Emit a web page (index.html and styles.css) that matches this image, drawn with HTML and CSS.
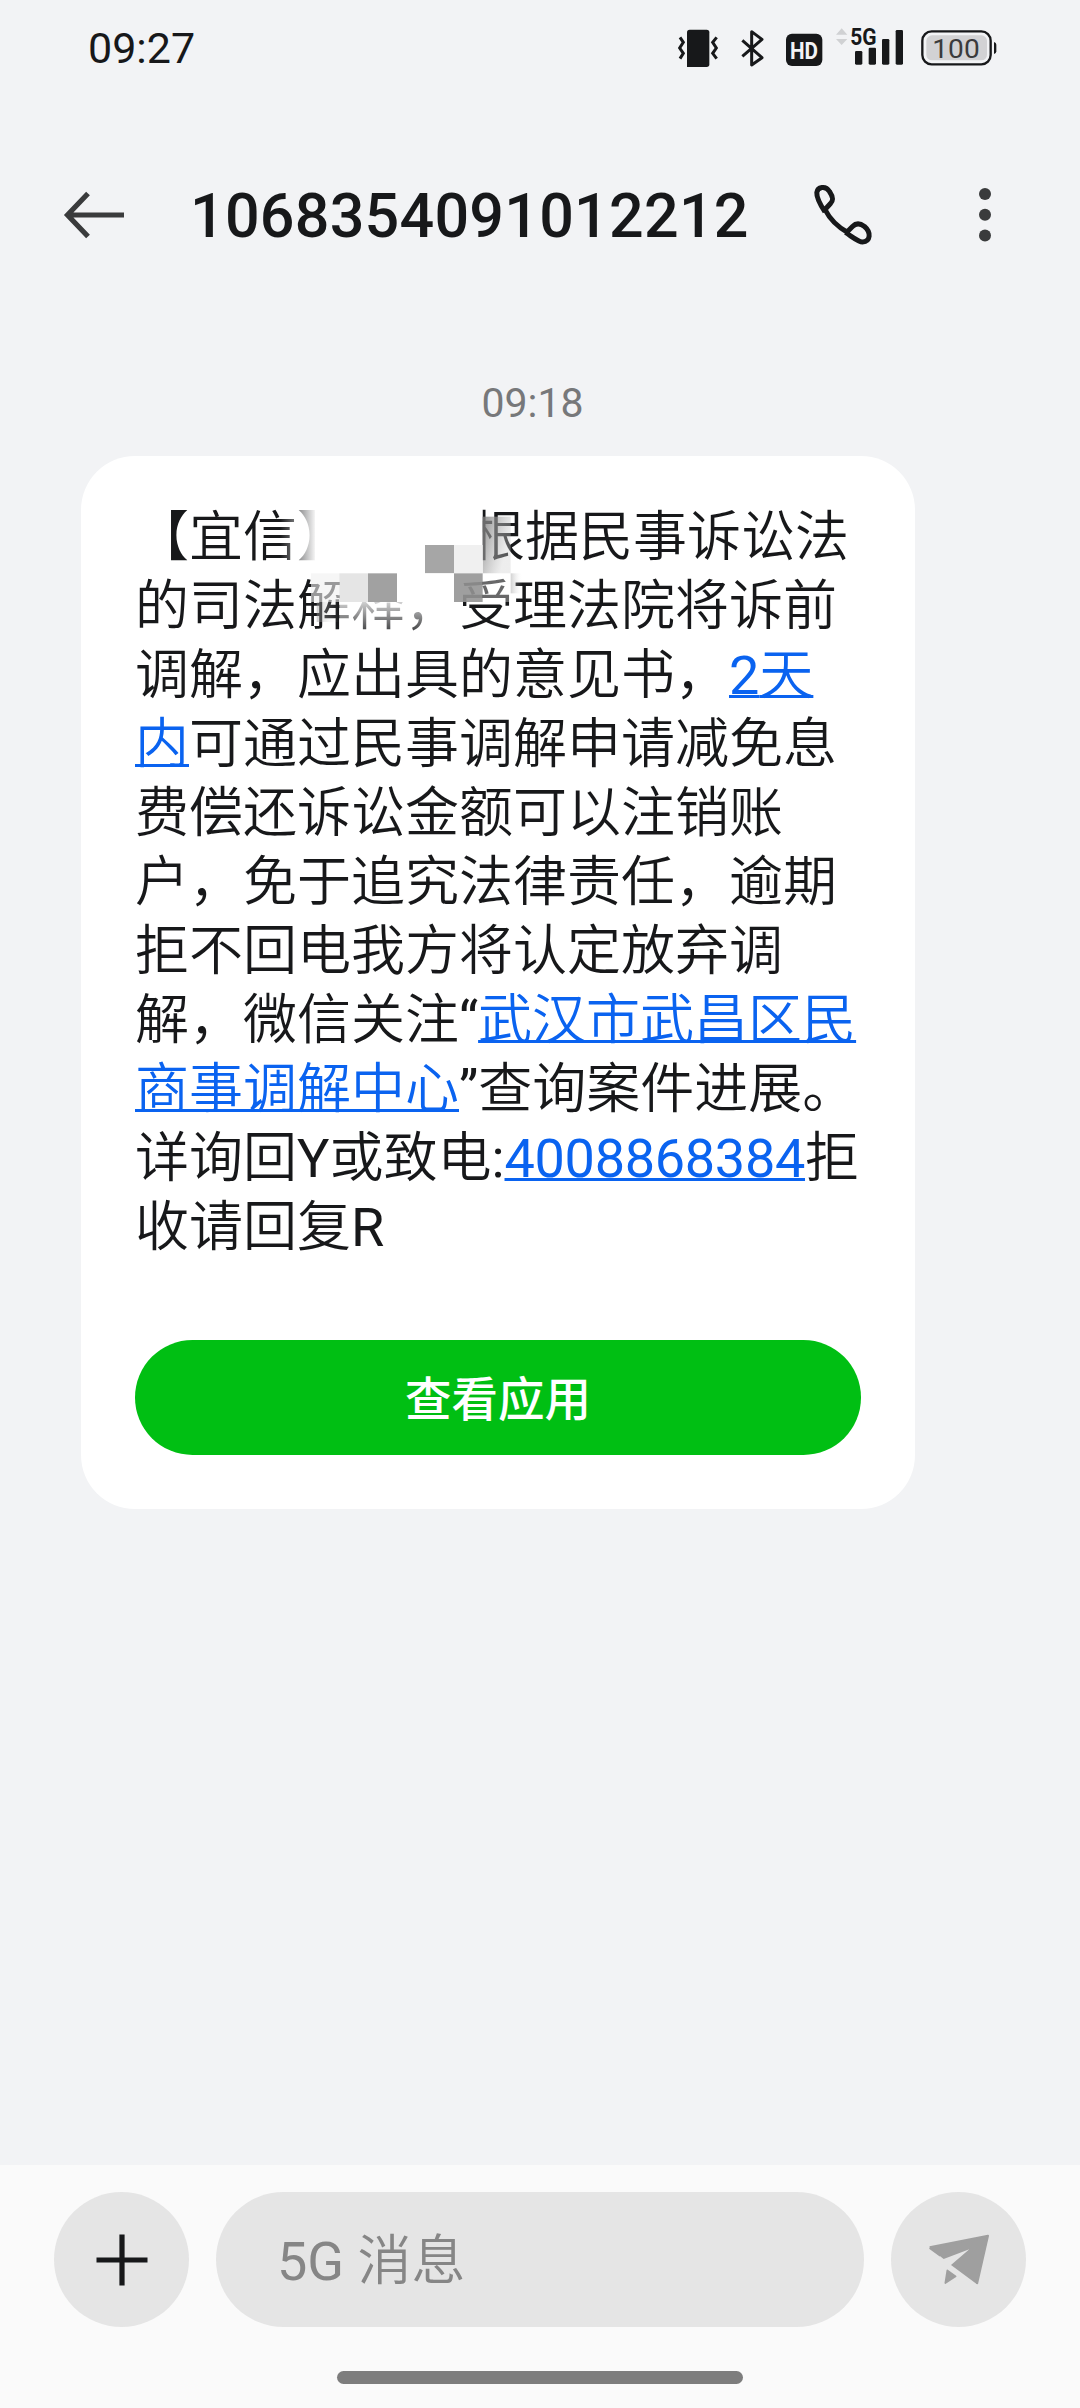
FILE: index.html
```html
<!DOCTYPE html>
<html lang="zh-CN">
<head>
<meta charset="utf-8">
<title>短信</title>
<link rel="stylesheet" href="styles.css">
</head>
<body>
<div class="screen">
  <header class="status-bar">
    <span class="clock">09:27</span>
    <div class="status-icons">
      <svg width="55" height="80" viewBox="45 0 165 240">
        <path fill="#17181a" d="M89 59H140Q148 59 148 67V163Q148 171 140 171H81V67Q81 59 89 59Z"/>
        <path class="line" stroke-width="9" d="M60 82L70 97L59 114L70 130L60 146M170 82L158 97L169 114L158 130L170 146"/>
      </svg>
      <svg width="45" height="80" viewBox="210 0 135 240">
        <path class="line" stroke-width="9" stroke-linejoin="round" d="M247 91L306 143L275 165V65L306 88L247 139"/>
      </svg>
      <svg width="55" height="80" viewBox="345 0 165 240">
        <rect x="378" y="71" width="109" height="97" rx="18" fill="#17181a"/>
        <text class="hd" x="390" y="146" textLength="84" lengthAdjust="spacingAndGlyphs">HD</text>
      </svg>
      <svg width="80" height="80" viewBox="510 0 240 240">
        <path fill="#d0d1d3" d="M545 55L562 74H528ZM528 87H562L545 105Z"/>
        <text class="net" x="571" y="106" textLength="79" lengthAdjust="spacingAndGlyphs">5G</text>
        <g fill="#17181a">
          <rect x="585" y="123" width="22" height="41" rx="4"/>
          <rect x="626" y="113" width="22" height="51" rx="4"/>
          <rect x="666" y="87" width="22" height="77" rx="4"/>
          <rect x="707" y="60" width="22" height="104" rx="4"/>
        </g>
      </svg>
      <svg width="90" height="80" viewBox="750 0 270 240">
        <rect x="787" y="64" width="205" height="99" rx="28" fill="none" stroke="#17181a" stroke-width="7"/>
        <rect x="799" y="76" width="182" height="75" rx="17" fill="#d2d2d4"/>
        <path fill="#17181a" d="M1002 96Q1009 98 1009 104V124Q1009 130 1002 132Z"/>
        <text class="level" x="817" y="144" textLength="142" lengthAdjust="spacingAndGlyphs">100</text>
      </svg>
    </div>
  </header>

  <div class="title-bar">
    <svg class="back" width="64" height="64" viewBox="0 0 64 64">
      <path d="M27 10.500L6.500 32L27 53.500M6.500 32H63" fill="none" stroke="#3a3b3c" stroke-width="5.200"/>
    </svg>
    <h1 class="number">1068354091012212</h1>
    <svg class="call" width="64" height="64" viewBox="0 0 64 64">
      <path d="M15.500 29.500C10 21 7 14 7.300 10C8 4.500 16 2.500 20 9C24 15 24 18 21 21L15.500 27M15.500 27C20 36 29 45 39 50.500M37.500 49.500L43 44C47 40 51 41 55 44C62 50 61 59 53 59.500C49 59.500 43 54.500 36 50" transform="translate(-.500 -.500)" fill="none" stroke="#17181a" stroke-width="5" stroke-linejoin="round"/>
    </svg>
    <svg class="more" width="14" height="64" viewBox="0 0 14 64">
      <g fill="#3a3b3c"><circle cx="7" cy="11" r="6"/><circle cx="7" cy="31.700" r="6"/><circle cx="7" cy="52.500" r="6"/></g>
    </svg>
  </div>

  <main class="thread">
    <time class="stamp">09:18</time>
    <article class="bubble">
      <p class="message">【宜信】<span class="hidden-name"></span>根据民事诉讼法<br>的司法解释，受理法院将诉前<br>调解，应出具的意见书，<a class="link"><span class="latin">2</span>天</a><br><a class="link">内</a>可通过民事调解申请减免息<br>费偿还诉讼金额可以注销账<br>户，免于追究法律责任，逾期<br>拒不回电我方将认定放弃调<br>解，微信关注<span class="latin">“</span><a class="link">武汉市武昌区民</a><br><a class="link">商事调解中心</a><span class="latin">”</span>查询案件进展。<br>详询回<span class="latin">Y</span>或致电<span class="latin">:</span><a class="link latin phone">4008868384</a>拒<br>收请回复<span class="latin">R</span></p>
      <svg class="mosaic" width="260" height="133" viewBox="600 201 780 399">
        <defs>
          <linearGradient id="fadeRight"><stop offset="0" stop-color="#fff" stop-opacity="0"/><stop offset="1" stop-color="#fff"/></linearGradient>
          <linearGradient id="fadeDown" x2="0" y2="1"><stop offset="0" stop-color="#fff" stop-opacity=".8"/><stop offset="1" stop-color="#fff" stop-opacity=".1"/></linearGradient>
          <linearGradient id="shade" x2=".9" y2=".5"><stop offset="0" stop-color="#777" stop-opacity=".85"/><stop offset="1" stop-color="#ccc" stop-opacity=".35"/></linearGradient>
          <linearGradient id="smudge"><stop offset="0" stop-color="#999" stop-opacity=".45"/><stop offset="1" stop-color="#fff" stop-opacity="0"/></linearGradient>
        </defs>
        <rect x="600" y="205" width="110" height="160" fill="url(#fadeRight)"/>
        <rect x="706" y="201" width="502" height="199" fill="#fff"/>
        <rect x="1208" y="230" width="84" height="170" fill="url(#shade)"/>
        <rect x="1035" y="315" width="87" height="85" fill="#a6a6a6"/>
        <rect x="1122" y="315" width="86" height="85" fill="#f0f0f0"/>
        <rect x="787" y="400" width="335" height="86" fill="#fff"/>
        <rect x="693" y="400" width="85" height="86" fill="#f0f0f0" fill-opacity=".6"/>
        <rect x="778" y="400" width="86" height="86" fill="#e5e5e5"/>
        <rect x="864" y="400" width="87" height="86" fill="#a1a1a1"/>
        <rect x="1208" y="400" width="84" height="86" fill="#fff" fill-opacity=".35"/>
        <rect x="1122" y="400" width="86" height="86" fill="#959595" fill-opacity=".9"/>
        <rect x="1292" y="400" width="36" height="60" fill="url(#smudge)"/>
        <rect x="710" y="486" width="68" height="60" fill="url(#smudge)"/>
        <rect x="778" y="486" width="262" height="100" fill="url(#fadeDown)"/>
      </svg>
      <button class="open-app">查看应用</button>
    </article>
  </main>

  <footer class="composer">
    <div class="compose-row">
      <button class="round">
        <svg width="52" height="52" viewBox="0 0 52 52"><path d="M26 .500V51.500M.500 26H51.500" stroke="#17181a" stroke-width="5.200"/></svg>
      </button>
      <div class="field"><span class="latin">5G </span>消息</div>
      <button class="round">
        <svg width="62" height="52" viewBox="443 286 186 156">
          <g fill="#9f9f9f" stroke="#9f9f9f" stroke-width="6" stroke-linejoin="round">
            <path d="M447 327L624 291L590 437L512 379L567 332L490 361Z" stroke="none"/>
            <path d="M448 326L623 291L590 436M448 328L480 351" fill="none"/>
            <path d="M501 395L526 413L495 433Z" stroke-width="5"/>
          </g>
        </svg>
      </button>
    </div>
    <div class="home-indicator"></div>
  </footer>
</div>
</body>
</html>
```
FILE: styles.css
```css
* { box-sizing: border-box; }

body {
  margin: 0;
  font-family: Roboto, "Noto Sans CJK SC", sans-serif;
  color: #17181a;
  background: #f2f3f5;
}

svg { display: block; flex: none; }

button {
  border: 0;
  padding: 0;
  font-family: inherit;
}

.screen {
  display: flex;
  flex-direction: column;
  width: 1080px;
  height: 2408px;
}

.status-bar {
  display: flex;
  justify-content: space-between;
  height: 100px;
  padding: 10px 80px 0 88px;
}

.clock {
  font-size: 43px;
  line-height: 76px;
}

.status-icons { display: flex; }

.line { fill: none; stroke: #17181a; }

.hd { font: 700 72px Roboto, sans-serif; fill: #f2f3f5; }

.net { font: 700 72px Roboto, sans-serif; fill: #17181a; }

.level { font: 400 80px Roboto, sans-serif; fill: #3a3b3c; }

.title-bar {
  display: flex;
  align-items: center;
  height: 130px;
  margin-top: 50px;
  padding: 0 88px 0 61px;
}

.number {
  width: 560px;
  margin: 2px 0 0 65px;
  font-size: 61px;
  font-weight: 500;
  line-height: 70px;
  letter-spacing: 0.25px;
  white-space: nowrap;
}

.call { margin-left: 60px; }

.more { margin-left: auto; }

.thread {
  display: flex;
  flex: 1;
  flex-direction: column;
  padding: 98px 165px 0 81px;
}

.stamp {
  margin: 0 -84px 28px 0;
  padding-right: 15px;
  font-size: 41px;
  line-height: 50px;
  text-align: center;
  color: #77787a;
}

.bubble {
  position: relative;
  height: 1053px;
  padding: 47px 54px 54px;
  border-radius: 54px;
  background: #fff;
}

.message {
  height: 758px;
  margin: 0;
  font-size: 54px;
  font-weight: 350;
  line-height: 69px;
  white-space: nowrap;
}

.latin { font-weight: 400; }

.hidden-name { display: inline-block; width: 120px; }

.link {
  color: #0a63f0;
  text-decoration: underline;
  text-decoration-thickness: 2.5px;
  text-underline-offset: 1px;
  text-decoration-skip-ink: none;
}

.phone { letter-spacing: -0.3px; }

.mosaic {
  position: absolute;
  left: 199px;
  top: 51px;
}

.open-app {
  display: block;
  width: 726px;
  height: 115px;
  margin-top: 79px;
  padding-top: 6px;
  border-radius: 58px;
  font-size: 46.5px;
  font-weight: 500;
  line-height: 109px;
  color: #fff;
  background: #00bf13;
}

.composer {
  height: 243px;
  padding: 27px 54px 0;
  background: #fafafa;
}

.compose-row {
  display: flex;
  gap: 27px;
  height: 135px;
}

.round {
  display: flex;
  align-items: center;
  justify-content: center;
  width: 135px;
  height: 135px;
  border-radius: 50%;
  background: #e5e5e5;
}

.field {
  flex: 1;
  padding-left: 61px;
  border-radius: 68px;
  font-size: 54px;
  font-weight: 350;
  line-height: 139px;
  color: #868686;
  background: #e5e5e5;
}

.home-indicator {
  width: 406px;
  height: 13px;
  margin: 44px auto 0;
  border-radius: 7px;
  background: #7d7d7d;
}
```
